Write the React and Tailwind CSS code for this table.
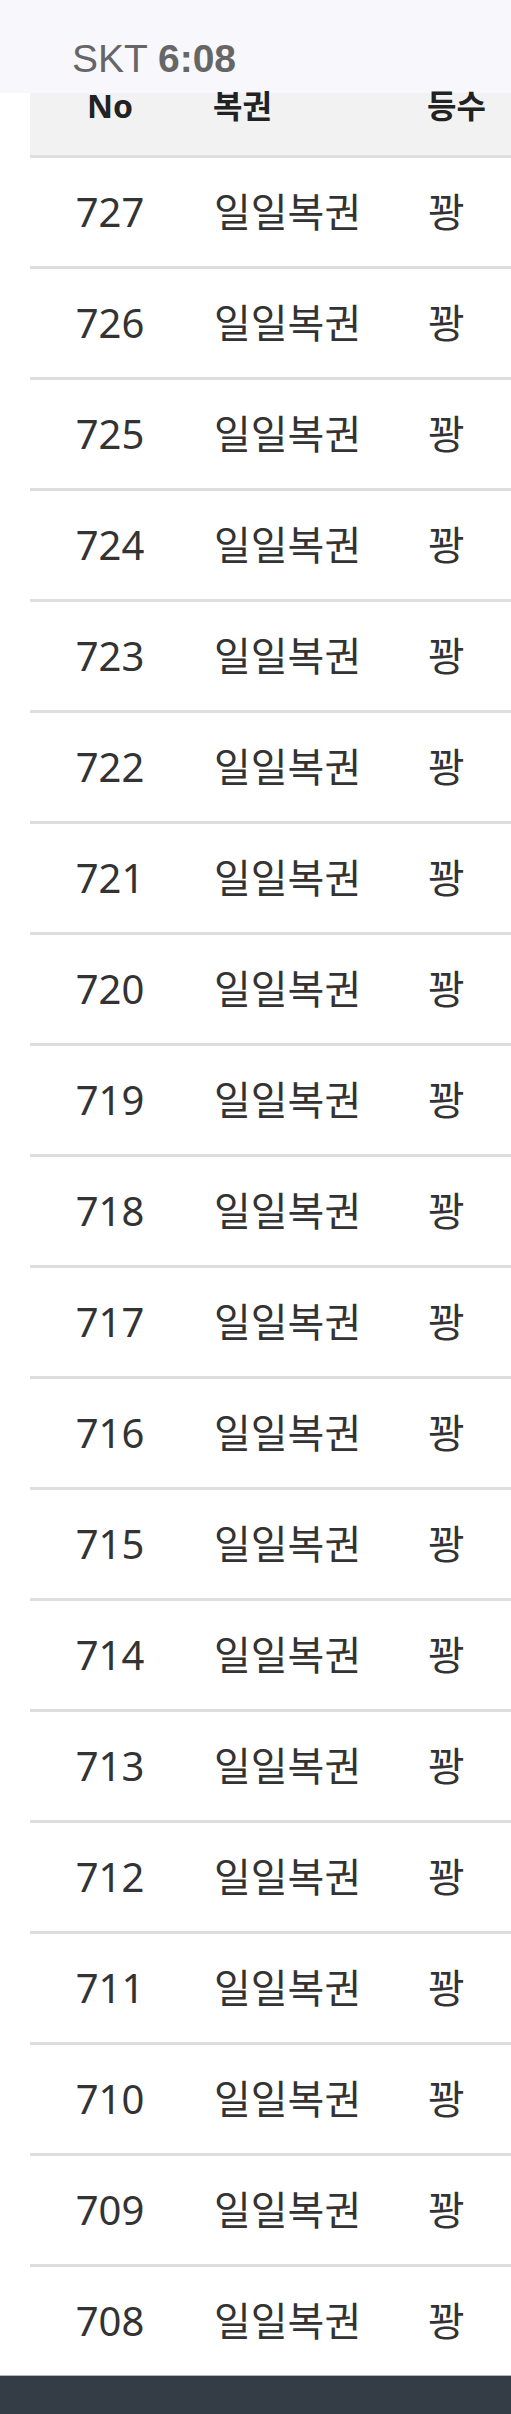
import React from 'react'

// ── Data ──────────────────────────────────────────────────────────────────────

const rows = Array.from({ length: 20 }, (_, i) => ({
  no: 727 - i,
  name: '일일복권',
  rank: '꽝',
}))

const font = { fontFamily: '"Noto Sans", "Noto Sans CJK KR", sans-serif' }

// ── Status bar ────────────────────────────────────────────────────────────────

function StatusBar() {
  return (
    <div className="h-[93px] bg-[#f8f8fc] pl-[72px] pt-[39px]">
      <div className="text-[39px] leading-none text-[#666] font-['Liberation_Sans',sans-serif]">
        SKT <span className="font-bold">6:08</span>
      </div>
    </div>
  )
}

// ── Table ─────────────────────────────────────────────────────────────────────

function HeaderRow() {
  return (
    <div className="flex h-[65px] bg-[#f2f2f2] border-b-[3px] border-[#dedede] text-[32px] leading-[26px] font-bold text-[#222]">
      <div className="w-[160px] text-center">No</div>
      <div className="w-[237px] pl-[23px]">복권</div>
      <div className="flex-1">등수</div>
    </div>
  )
}

function Row({ row, last }) {
  return (
    <div className={`flex items-center h-[108px] text-[40px] leading-none text-[#333] ${
      last ? '' : 'box-content border-b-[3px] border-[#dedede]'
    }`}>
      <div className="w-[160px] text-center">{row.no}</div>
      <div className="w-[237px] pl-[24px]">{row.name}</div>
      <div className="flex-1 pl-[1px]">{row.rank}</div>
    </div>
  )
}

export default function App() {
  return (
    <div className="w-[511px] bg-white" style={font}>
      <StatusBar />
      <div className="ml-[30px]">
        <HeaderRow />
        {rows.map((r, i) => (
          <Row key={r.no} row={r} last={i === rows.length - 1} />
        ))}
      </div>
      <div className="h-[40px] bg-[#343d46] border-t border-[#b4b8bc]" />
    </div>
  )
}
